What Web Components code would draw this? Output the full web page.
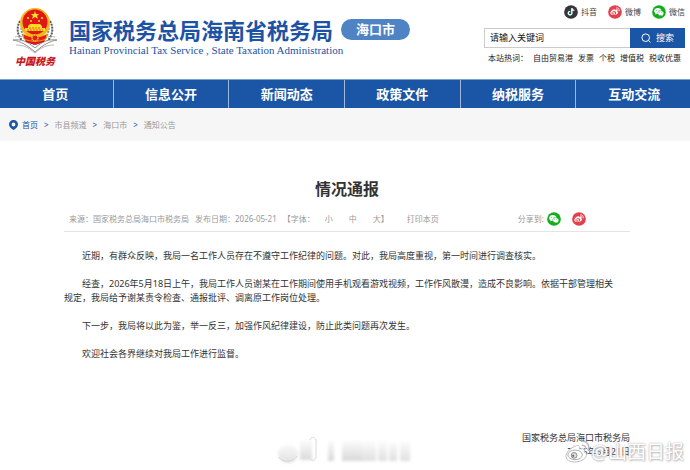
<!DOCTYPE html>
<html lang="zh-CN">
<head>
<meta charset="utf-8">
<meta name="viewport" content="width=device-width, initial-scale=1">
<title>情况通报</title>
<style>
    body {
        margin: 0;
        background: #fff;
        color: #333;
        font: 9px/14px "Noto Sans", "Noto Sans CJK SC", sans-serif;
    }
</style>
</head>
<body>
<tax-page>
    <site-header slot="header"></site-header>
    <site-nav slot="header"></site-nav>
    <bread-crumb slot="header"></bread-crumb>
    <notice-article>
        <span slot="title">情况通报</span>
        <p>近期，有群众反映，我局一名工作人员存在不遵守工作纪律的问题。对此，我局高度重视，第一时间进行调查核实。</p>
        <p>经查，2026年5月18日上午，我局工作人员谢某在工作期间使用手机观看游戏视频，工作作风散漫，造成不良影响。依据干部管理相关规定，我局给予谢某责令检查、通报批评、调离原工作岗位处理。</p>
        <p>下一步，我局将以此为鉴，举一反三，加强作风纪律建设，防止此类问题再次发生。</p>
        <p>欢迎社会各界继续对我局工作进行监督。</p>
        <span slot="office">国家税务总局海口市税务局</span>
        <time slot="date" datetime="2026-05-21">2026年5月21日</time>
    </notice-article>
    <smudge-mark slot="mark"></smudge-mark>
    <weibo-mark slot="mark">@山西日报</weibo-mark>
</tax-page>

<script>
const define = (name, html) => {
    const template = document.createElement('template');
    template.innerHTML = html;
    window.customElements.define(name, class extends HTMLElement {
        constructor() {
            super();
            this.attachShadow({mode: 'open'}).appendChild(template.content.cloneNode(true));
        }
    });
};

const glyphs = {
    douyin: ['#35353a', `
        <path d="M10.8 4.5v7.2a2.5 2.5 0 1 1-2.4-2.5" fill="none" stroke="#35d5d8" stroke-width="1.8"/>
        <path d="M11.3 4.5v7.2a2.5 2.5 0 1 1-2.4-2.5M11.3 4.5c.3 2 1.6 3 3.5 3.1" fill="none" stroke="#fff" stroke-width="1.7"/>`],
    weibo: ['#e0414c', `
        <path d="M8.8 6.2c1.3-.6 2 .1 1.7 1.3 1.8-.6 3 0 2.5 1.4 1.5.6 1.7 2 .6 3.4-2.4 3-9.9 2.8-10.3-.6-.2-1.9 2.7-4.8 5.5-5.5z" fill="#fff"/>
        <ellipse cx="8.3" cy="11.4" rx="3.5" ry="2.4" fill="#e0414c" transform="rotate(-8 8.3 11.4)"/>
        <ellipse cx="8" cy="11.5" rx="2" ry="1.6" fill="#fff"/>
        <circle cx="7.5" cy="11.7" r=".8" fill="#e0414c"/>
        <path d="M12.1 4.2c2.9-.5 4.7 1.7 3.9 4.3M12.3 6.2c1.3-.2 2.1.6 1.8 1.8" fill="none" stroke="#fff" stroke-width="1.1" stroke-linecap="round"/>`],
    wechat: ['#12ae1c', `
        <path d="M8.3 4.3c-3 0-5.2 1.9-5.2 4.2 0 1.4.7 2.5 1.9 3.3l-.5 1.7 2-1c.6.2 1.2.2 1.8.2 2.9 0 5.2-1.9 5.2-4.2S11.2 4.3 8.3 4.3z" fill="#fff"/>
        <path d="M12.6 8.2c-2.5 0-4.4 1.6-4.4 3.6s1.9 3.6 4.4 3.6l1.4-.2 1.7.9-.4-1.5c1-.7 1.6-1.7 1.6-2.8 0-2-1.9-3.6-4.3-3.6z" fill="#fff" stroke="#12ae1c" stroke-width=".7"/>
        <g fill="#12ae1c"><circle cx="6.7" cy="7.5" r=".7"/><circle cx="10" cy="7.5" r=".7"/><circle cx="11.2" cy="11" r=".6"/><circle cx="14" cy="11" r=".6"/></g>`]
};

class SocialLink extends HTMLElement {
    constructor() {
        super();
        this._root = this.attachShadow({mode: 'open'});
    }

    connectedCallback() {
        const [color, shape] = glyphs[this.getAttribute('icon')];
        this._root.innerHTML = `
<style>
    :host { display: block; }
    a { display: flex; align-items: center; gap: 3px; color: #444; font-size: 8px; text-decoration: none; }
    svg { display: block; width: 14px; height: 14px; }
</style>
<a href="#" aria-label="${this.getAttribute('label')}">
    <svg viewBox="0 0 20 20" aria-hidden="true"><circle cx="10" cy="10" r="9.8" fill="${color}"/>${shape}</svg>
    <slot></slot>
</a>`;
    }
}
window.customElements.define('social-link', SocialLink);

define('tax-emblem', `
<style>
    :host { display: block; text-align: center; }
    svg { display: block; width: 46px; height: 48px; }
    span {
        display: block;
        color: #c9151d;
        font: italic 900 10px/14px "Noto Sans CJK SC", sans-serif;
        white-space: nowrap;
    }
</style>
<svg viewBox="0 0 46 48" aria-hidden="true">
    <g fill="none" stroke="#55585a" stroke-width="2" stroke-dasharray="2 1">
        <path d="M8 15C2 25 8 38 22 42M38 15c6 10 0 23-14 27"/>
        <path d="M11 16C7 25 11 34 22 38M35 16c4 9 0 18-11 22" stroke="#85888a"/>
    </g>
    <path d="M1 34c8-1 14 1 22 8 8-7 14-9 22-8-7 1-14 5-22 12C15 39 8 35 1 34z" fill="#fff" stroke="#777" stroke-width=".8"/>
    <path d="M4 39c7 0 12 2 19 8 7-6 12-8 19-8M3 31c7-2 14 1 20 7 6-6 13-9 20-7" fill="none" stroke="#999" stroke-width=".7"/>
    <path d="M11 29h24l-3 7-9 3-9-3z" fill="#d7151c"/>
    <circle cx="23" cy="17" r="15" fill="#f3b71c"/>
    <circle cx="23" cy="16" r="12.5" fill="#df1717"/>
    <path d="M23 5l1 3h3l-2 2 1 3-3-2-3 2 1-3-2-2h3z" fill="#ffe32b"/>
    <g fill="#ffda25">
        <circle cx="16" cy="12" r="1.1"/><circle cx="30" cy="12" r="1.1"/>
        <circle cx="19" cy="15" r="1"/><circle cx="27" cy="15" r="1"/>
        <path d="M16 20l2-2h10l2 2v2h3v3H13v-3h3z"/>
    </g>
    <path d="M17 22h12M15 24h16" stroke="#c71616" stroke-width=".6" stroke-dasharray="2 1"/>
    <path d="M11 28c7 4 17 4 24 0l-1 5c-7 3-15 3-22 0z" fill="#e21c18" stroke="#f3b71c" stroke-width=".8"/>
    <circle cx="23" cy="32" r="3" fill="#e21c18" stroke="#ffd325" stroke-width="1.3" stroke-dasharray="1.2 .6"/>
</svg>
<span>中国税务</span>
`);

define('site-search', `
<style>
    :host { display: block; }
    form { display: flex; height: 20px; margin: 0; }
    input {
        flex: 1;
        min-width: 0;
        box-sizing: border-box;
        padding: 0 5px;
        border: 1px solid #ccc;
        border-right: 0;
        font: inherit;
        color: #111;
        outline: none;
    }
    input::placeholder { color: #111; opacity: 1; }
    button {
        display: flex;
        align-items: center;
        justify-content: center;
        gap: 5px;
        width: 55px;
        padding: 0;
        border: 0;
        background: #1a55a6;
        color: #fff;
        font: inherit;
    }
    svg { width: 10px; height: 10px; }
</style>
<form onsubmit="return false">
    <input type="text" aria-label="请输入关键词" placeholder="请输入关键词">
    <button type="submit">
        <svg viewBox="0 0 10 10" aria-hidden="true"><path d="M7.5 7.5L9.5 9.5M8.5 4.7a3.8 3.8 0 1 1-7.6 0 3.8 3.8 0 0 1 7.6 0z" fill="none" stroke="#fff"/></svg>
        搜索
    </button>
</form>
`);

define('site-header', `
<style>
    :host {
        display: flex;
        justify-content: space-between;
        height: 79px;
        padding: 0 5px 0 12px;
        color: #1d53a5;
    }
    .brand { display: flex; gap: 11px; padding-top: 6px; }
    .names { padding-top: 10px; white-space: nowrap; }
    .row { display: flex; align-items: center; gap: 8px; }
    h1 { margin: 0; font: bold 22px/26px "Noto Sans CJK SC", sans-serif; }
    .city {
        padding: 0 15px;
        border-radius: 11px;
        background: #4f83c4;
        color: #fff;
        font-size: 13px;
        font-weight: bold;
        line-height: 21px;
    }
    .en { margin: 0; font: 11px/16px "Liberation Serif", serif; }
    .tools { width: 201px; padding-top: 5px; color: #222; }
    .social { display: flex; justify-content: flex-end; gap: 11px; margin-bottom: 9px; }
    .hot { display: flex; gap: 5px; padding-left: 4px; font-size: 8px; line-height: 20px; white-space: nowrap; }
    .hot a { color: inherit; text-decoration: none; }
</style>
<div class="brand">
    <tax-emblem></tax-emblem>
    <div class="names">
        <div class="row">
            <h1>国家税务总局海南省税务局</h1>
            <span class="city">海口市</span>
        </div>
        <p class="en">Hainan Provincial Tax Service , State Taxation Administration</p>
    </div>
</div>
<div class="tools">
    <div class="social">
        <social-link icon="douyin" label="抖音">抖音</social-link>
        <social-link icon="weibo" label="微博">微博</social-link>
        <social-link icon="wechat" label="微信">微信</social-link>
    </div>
    <site-search></site-search>
    <div class="hot">
        <span>本站热词：</span>
        <a href="#">自由贸易港</a><a href="#">发票</a><a href="#">个税</a><a href="#">增值税</a><a href="#">税收优惠</a>
    </div>
</div>
`);

define('site-nav', `
<style>
    :host { display: block; overflow: hidden; background: #1a55a6; border-top: 1px solid #7d9fcd; }
    nav { display: grid; grid-template-columns: repeat(6, 1fr); margin: 0 -2px; }
    a {
        color: #fff;
        font-size: 13px;
        font-weight: bold;
        line-height: 28px;
        text-align: center;
        text-decoration: none;
    }
    a:not(:last-child) { border-right: 1px solid #9db8dc; }
</style>
<nav>
    <a href="#">首页</a>
    <a href="#">信息公开</a>
    <a href="#">新闻动态</a>
    <a href="#">政策文件</a>
    <a href="#">纳税服务</a>
    <a href="#">互动交流</a>
</nav>
`);

define('bread-crumb', `
<style>
    :host { display: block; background: #f6f6f6; color: #1d53a5; }
    nav { display: flex; align-items: center; gap: 6px; height: 33px; padding: 0 9px; font-size: 8px; }
    .here { display: flex; align-items: center; gap: 4px; }
    svg { width: 9px; height: 10px; }
    a { color: #999; text-decoration: none; }
    a.home { color: #1d53a5; }
</style>
<nav aria-label="当前位置">
    <div class="here">
        <svg viewBox="0 0 9 10" aria-hidden="true"><path d="M4.5 0A4.4 4.4 0 0 0 0 4.4C0 7 2.5 8.5 4.5 10 6.5 8.5 9 7 9 4.4A4.4 4.4 0 0 0 4.5 0zm0 2.6a1.9 1.9 0 1 1 0 3.8 1.9 1.9 0 0 1 0-3.8z" fill="#1a55a6"/></svg>
        <a class="home" href="#">首页</a>
    </div>
    <span>&gt;</span>
    <a href="#">市县频道</a><span>&gt;</span>
    <a href="#">海口市</a><span>&gt;</span>
    <a href="#">通知公告</a>
</nav>
`);

define('article-meta', `
<style>
    :host {
        display: flex;
        align-items: center;
        justify-content: space-between;
        height: 24px;
        padding: 0 44px 0 5px;
        border-bottom: 1px solid #e4e4e4;
        color: #999;
        font-size: 8px;
        white-space: nowrap;
    }
    div { display: flex; align-items: center; }
    .info { gap: 6px; }
    .size { gap: 10px; }
    .steps { gap: 16px; }
    .share { gap: 3px; }
    .icons { gap: 11px; }
    button { padding: 0; border: 0; background: none; color: inherit; font: inherit; }
    .print { margin-left: 12px; }
</style>
<div class="info">
    <span>来源：国家税务总局海口市税务局</span>
    <span>发布日期：2026-05-21</span>
    <div class="size">
        <span>【字体：</span>
        <div class="steps">
            <button type="button">小</button>
            <button type="button">中</button>
            <div><button type="button">大</button>】</div>
        </div>
    </div>
    <button class="print" type="button">打印本页</button>
</div>
<div class="share">
    <span>分享到:</span>
    <div class="icons">
        <social-link icon="wechat" label="微信"></social-link>
        <social-link icon="weibo" label="微博"></social-link>
    </div>
</div>
`);

define('notice-article', `
<style>
    :host { display: block; padding: 36px 60px 0 64px; }
    h2 { margin: 0 0 6px; font-size: 16px; line-height: 24px; text-align: center; }
    article { padding: 17px 10px 0 0; }
    ::slotted(p) { margin: 0 0 14px; text-indent: 2em; }
    footer { display: grid; justify-items: end; margin-top: 70px; }
</style>
<h2><slot name="title"></slot></h2>
<article-meta></article-meta>
<article><slot></slot></article>
<footer><slot name="office"></slot><slot name="date"></slot></footer>
`);

define('smudge-mark', `
<style>
    :host { position: absolute; left: 40%; bottom: 4px; }
    svg { display: block; width: 140px; height: 30px; }
</style>
<svg viewBox="0 0 140 30" aria-hidden="true">
    <defs>
        <filter id="soft" x="-20%" y="-20%" width="140%" height="140%"><feGaussianBlur stdDeviation="1.6"/></filter>
        <linearGradient id="fade" gradientUnits="userSpaceOnUse" x1="0" y1="3" x2="0" y2="27"><stop stop-color="#fff"/><stop offset="1" stop-color="#d4d4d4"/></linearGradient>
    </defs>
    <g fill="url(#fade)" filter="url(#soft)">
        <ellipse cx="12" cy="18" rx="10" ry="9" opacity=".7"/>
        <path d="M24 4h12v20H24zM52 5h6v20h-6zM66 5h19v20H66z"/>
        <path d="M85 5h15v20H85zM102 5h9v20h-9zM113 7h8v18h-8zM124 6h10v19h-10z" opacity=".8"/>
    </g>
    <path d="M34 4c1-4 7-3 6 2v15c0 3-3 4-5 3M3 21c3 6 14 6 18-1" fill="none" stroke="#d0d0d0" stroke-width=".8"/>
</svg>
`);

define('weibo-mark', `
<style>
    :host {
        position: absolute;
        right: 6px;
        bottom: 5px;
        display: flex;
        align-items: center;
        color: #fff;
        font-size: 19px;
        line-height: 20px;
        text-shadow: 0 0 2px #aaa, 1px 1px 2px #bbb;
    }
    svg { width: 27px; height: 26px; }
</style>
<svg viewBox="0 0 28 26" aria-hidden="true">
    <path d="M12 7c3-2 5 0 4 3 4-1 6 0 5 3 3 1 3 4 1 6-5 6-19 6-20-1-.5-4 5-10 10-11z" fill="#fff" stroke="#bbb"/>
    <ellipse cx="11.5" cy="16" rx="7.5" ry="5" fill="#fff" stroke="#aaa"/>
    <circle cx="10.5" cy="16.5" r="3" fill="#ddd" stroke="#888"/>
    <circle cx="9.5" cy="17" r="1.1" fill="#666"/>
    <path d="M18 2c6-1 9 4 7 9M19 6c3 0 4 2 3 4" fill="none" stroke="#bbb" stroke-width="1.4" stroke-linecap="round"/>
</svg>
<slot></slot>
`);

define('tax-page', `
<style>
    :host { display: block; position: relative; min-height: 100vh; }
</style>
<header><slot name="header"></slot></header>
<main><slot></slot></main>
<slot name="mark"></slot>
`);
</script>
</body>
</html>
